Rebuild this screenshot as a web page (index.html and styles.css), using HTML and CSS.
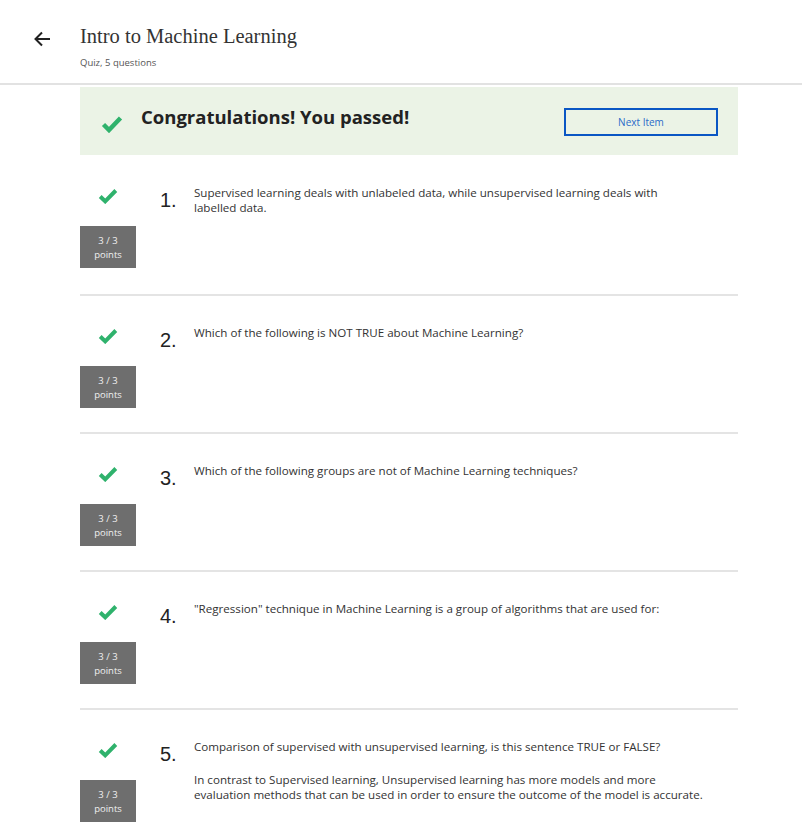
FILE: index.html
```html
<!DOCTYPE html>
<html>
<head>
<meta charset="utf-8">
<link rel="stylesheet" href="styles.css">
</head>
<body>
<header class="header">
  <div class="back">
    <svg width="18" height="18" viewBox="0 0 18 18"><path d="M17 9H2.5M9 2.5L2.5 9L9 15.5" fill="none" stroke="#222" stroke-width="2"/></svg>
  </div>
  <div class="titles">
    <div class="title">Intro to Machine Learning</div>
    <div class="subtitle">Quiz, 5 questions</div>
  </div>
</header>
<main class="content">
  <section class="banner">
    <svg class="check big" width="22" height="18" viewBox="0 0 22 18"><path d="M2.5 9.5L8 15L19.5 3" fill="none" stroke="#2fb26c" stroke-width="4.5"/></svg>
    <h1 class="banner-text">Congratulations! You passed!</h1>
    <button class="next">Next Item</button>
  </section>

  <section class="q first">
    <div class="side">
      <svg class="check" width="20" height="16" viewBox="0 0 20 16"><path d="M2.2 8.5L7.2 13.3L17.8 2.5" fill="none" stroke="#2fb26c" stroke-width="4"/></svg>
      <div class="points">3 / 3<br>points</div>
    </div>
    <div class="num">1.</div>
    <div class="text"><p>Supervised learning deals with unlabeled data, while unsupervised learning deals with labelled data.</p></div>
  </section>

  <section class="q">
    <div class="side">
      <svg class="check" width="20" height="16" viewBox="0 0 20 16"><path d="M2.2 8.5L7.2 13.3L17.8 2.5" fill="none" stroke="#2fb26c" stroke-width="4"/></svg>
      <div class="points">3 / 3<br>points</div>
    </div>
    <div class="num">2.</div>
    <div class="text"><p>Which of the following is NOT TRUE about Machine Learning?</p></div>
  </section>

  <section class="q">
    <div class="side">
      <svg class="check" width="20" height="16" viewBox="0 0 20 16"><path d="M2.2 8.5L7.2 13.3L17.8 2.5" fill="none" stroke="#2fb26c" stroke-width="4"/></svg>
      <div class="points">3 / 3<br>points</div>
    </div>
    <div class="num">3.</div>
    <div class="text"><p>Which of the following groups are not of Machine Learning techniques?</p></div>
  </section>

  <section class="q">
    <div class="side">
      <svg class="check" width="20" height="16" viewBox="0 0 20 16"><path d="M2.2 8.5L7.2 13.3L17.8 2.5" fill="none" stroke="#2fb26c" stroke-width="4"/></svg>
      <div class="points">3 / 3<br>points</div>
    </div>
    <div class="num">4.</div>
    <div class="text"><p>"Regression" technique in Machine Learning is a group of algorithms that are used for:</p></div>
  </section>

  <section class="q last">
    <div class="side">
      <svg class="check" width="20" height="16" viewBox="0 0 20 16"><path d="M2.2 8.5L7.2 13.3L17.8 2.5" fill="none" stroke="#2fb26c" stroke-width="4"/></svg>
      <div class="points">3 / 3<br>points</div>
    </div>
    <div class="num">5.</div>
    <div class="text">
      <p>Comparison of supervised with unsupervised learning, is this sentence TRUE or FALSE?</p>
      <p class="p2">In contrast to Supervised learning, Unsupervised learning has more models and more evaluation methods that can be used in order to ensure the outcome of the model is accurate.</p>
    </div>
  </section>
</main>
</body>
</html>
```
FILE: styles.css
```css
html, body {
  margin: 0;
  padding: 0;
  background: #fff;
}
body {
  font-family: "Open Sans", "Liberation Sans", sans-serif;
  color: #333;
  overflow: hidden;
}
.header {
  display: flex;
  height: 85px;
  box-sizing: border-box;
  border-bottom: 2px solid #e2e2e2;
}
.back {
  width: 80px;
  padding: 30px 0 0 33px;
  box-sizing: border-box;
}
.back svg { display: block; }
.titles {
  padding-top: 23px;
}
.title {
  font-family: "Liberation Serif", "DejaVu Serif", serif;
  font-size: 20.5px;
  line-height: 26px;
  color: #333;
}
.subtitle {
  margin-top: 7px;
  font-size: 9.5px;
  line-height: 13px;
  color: #555;
}
.content {
  width: 658px;
  margin: 2px 0 0 80px;
}
.banner {
  display: flex;
  align-items: center;
  height: 68px;
  background: #ebf3e6;
  padding: 0 20px 0 21px;
  box-sizing: border-box;
}
.banner .check { display: block; margin-top: 6px; }
.banner-text {
  margin: 0 0 0 18px;
  font-size: 18.5px;
  font-weight: 700;
  color: #222;
  flex: 1;
  line-height: 26px;
  padding-bottom: 8px;
}
.next {
  width: 154px;
  height: 28px;
  border: 2px solid #0a56c4;
  background: transparent;
  font-family: "Open Sans", "Liberation Sans", sans-serif;
  font-size: 10px;
  color: #2a6bc9;
  margin-top: 2px;
}
.q {
  display: flex;
  height: 138px;
  box-sizing: border-box;
  border-bottom: 2px solid #e4e4e4;
}
.q.first { height: 141px; padding-top: 1px; }
.q.last { border-bottom: none; height: 128px; }
.side {
  width: 56px;
  display: flex;
  flex-direction: column;
  align-items: center;
  padding-top: 32px;
}
.side .check { display: block; }
.points {
  margin-top: 22px;
  width: 56px;
  height: 42px;
  background: #6e6e6e;
  color: #f0f0f0;
  font-size: 9.5px;
  line-height: 14px;
  text-align: center;
  padding-top: 8px;
  box-sizing: border-box;
}
.num {
  margin-left: 24px;
  width: 34px;
  padding-top: 32px;
  font-family: "Liberation Sans", Arial, sans-serif;
  font-size: 20px;
  line-height: 24px;
  color: #222;
}
.text {
  width: 482px;
  padding-top: 29px;
  font-size: 11.6px;
  line-height: 15px;
  color: #333;
}
.text p { margin: 0; }
.text .p2 { margin-top: 18px; width: 520px; }
```
